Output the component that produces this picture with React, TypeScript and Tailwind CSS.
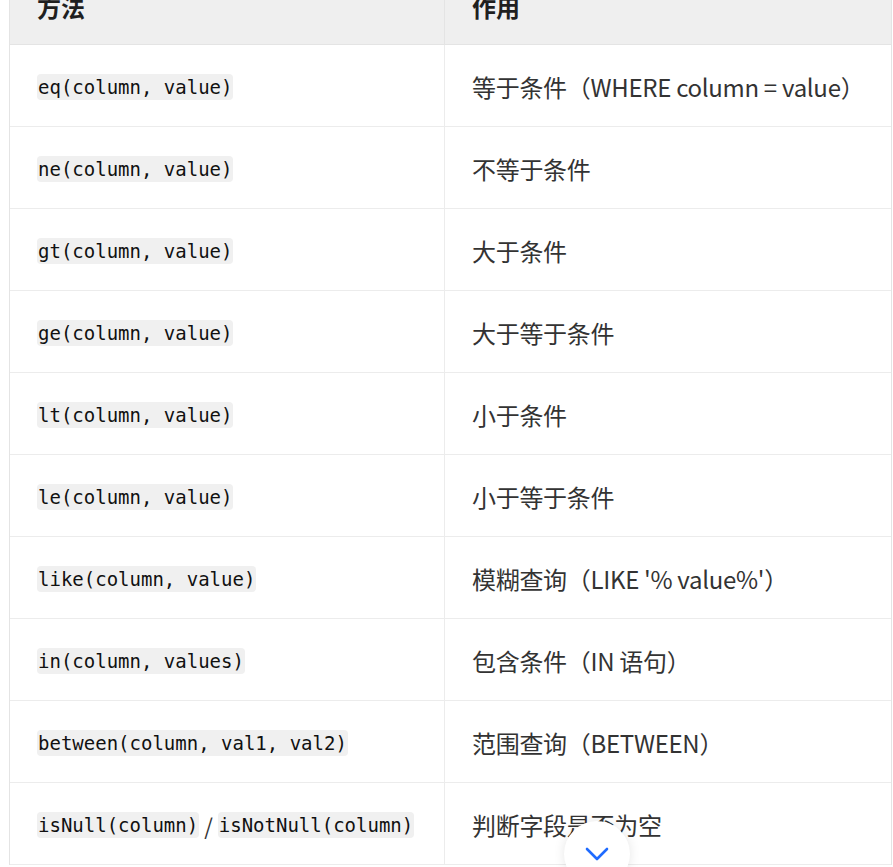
import React from "react";

type Row = { code: React.ReactNode; desc: string };

const Code = ({ children }: { children: React.ReactNode }) => (
  <code
    className="rounded-[4px] bg-[#f0f0f0] px-[1px] py-[1px] text-[19px] leading-[24px] text-[#111]"
    style={{ fontFamily: '"DejaVu Sans Mono", "Liberation Mono", monospace' }}
  >
    {children}
  </code>
);

const rows: Row[] = [
  { code: <Code>eq(column, value)</Code>, desc: "等于条件（WHERE column = value）" },
  { code: <Code>ne(column, value)</Code>, desc: "不等于条件" },
  { code: <Code>gt(column, value)</Code>, desc: "大于条件" },
  { code: <Code>ge(column, value)</Code>, desc: "大于等于条件" },
  { code: <Code>lt(column, value)</Code>, desc: "小于条件" },
  { code: <Code>le(column, value)</Code>, desc: "小于等于条件" },
  { code: <Code>like(column, value)</Code>, desc: "模糊查询（LIKE '% value%'）" },
  { code: <Code>in(column, values)</Code>, desc: "包含条件（IN 语句）" },
  { code: <Code>between(column, val1, val2)</Code>, desc: "范围查询（BETWEEN）" },
  {
    code: (
      <>
        <Code>isNull(column)</Code>
        <span className="mx-[5px] text-[22px] text-[#333]">/</span>
        <Code>isNotNull(column)</Code>
      </>
    ),
    desc: "判断字段是否为空",
  },
];

export default function App() {
  return (
    <div
      className="relative h-[867px] w-[893px] overflow-hidden bg-white text-[#333]"
      style={{ fontFamily: '"Noto Sans CJK SC", "Noto Sans", sans-serif' }}
    >
      <div className="ml-[9px] mt-[-38px] w-[883px] border-l border-r border-[#e4e4e4]">
        <div className="grid h-[83px] grid-cols-[435px_1fr] border-b border-[#e4e4e4] bg-[#efefef]">
          <div className="flex items-center border-r border-[#e4e4e4] pl-[27px] pt-[8px] text-[24px] font-bold text-[#1f1f1f]">
            方法
          </div>
          <div className="flex items-center pl-[27px] pt-[8px] text-[24px] font-bold text-[#1f1f1f]">
            作用
          </div>
        </div>
        {rows.map((r, i) => (
          <div
            key={i}
            className="grid h-[82px] grid-cols-[435px_1fr] border-b border-[#ececec]"
          >
            <div className="flex items-center border-r border-[#ececec] pl-[27px] pt-[3px]">
              {r.code}
            </div>
            <div className="flex items-center pl-[27px] pt-[2px] text-[24px] leading-[32px] tracking-[-0.3px] text-[#333]">
              {r.desc}
            </div>
          </div>
        ))}
      </div>
      <button className="absolute left-[564px] top-[821px] flex h-[66px] w-[66px] items-start justify-center rounded-full bg-white pt-[26px] shadow-[0_0_12px_rgba(0,0,0,0.10)]">
        <svg width="24" height="14" viewBox="0 0 24 14" fill="none">
          <polyline
            points="2,2 12,12 22,2"
            stroke="#1f6bff"
            strokeWidth="2.6"
            strokeLinecap="round"
            strokeLinejoin="round"
          />
        </svg>
      </button>
    </div>
  );
}
